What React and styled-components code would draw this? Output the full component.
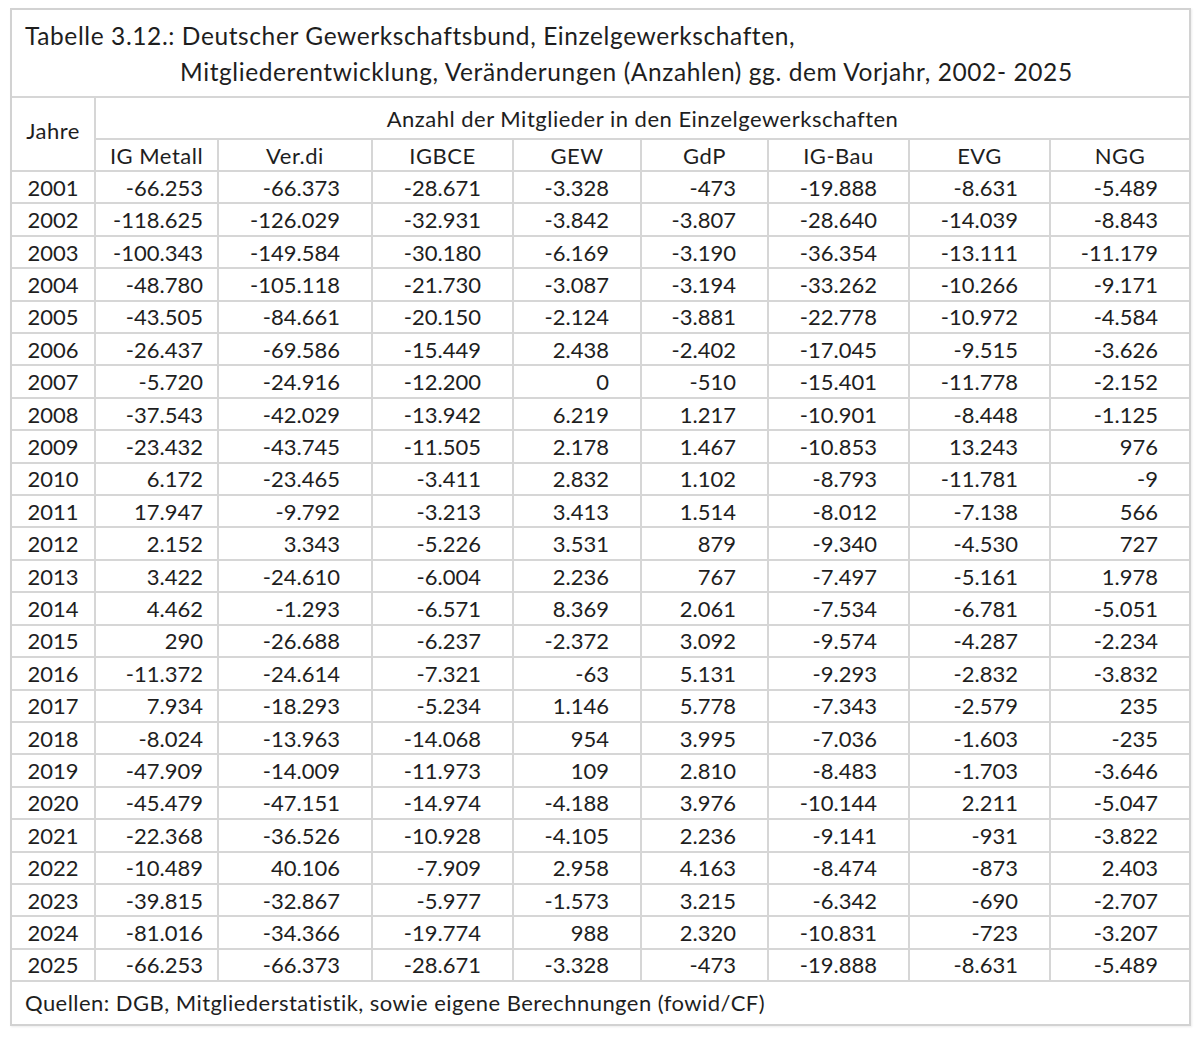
import React from "react";
import styled, { createGlobalStyle } from "styled-components";

const GlobalStyle = createGlobalStyle`
  html, body { margin: 0; padding: 0; background: #ffffff; }
  body { font-family: "Lato", "Liberation Sans", sans-serif; color: #1e1e1e; }
`;

const Page = styled.div`
  padding: 8px 0 0 10px;
  width: 1200px;
  height: 1038px;
  box-sizing: border-box;
`;

const Frame = styled.div`
  width: 1181px;
  box-sizing: border-box;
  border: 2px solid #d2d2d2;
  box-shadow: 1px 1px 2px rgba(0, 0, 0, 0.08);
  background: #fff;
`;

const Title = styled.div`
  padding: 8px 0 6px 13px;
  font-size: 24.5px;
  line-height: 36px;
  letter-spacing: 0.6px;
  border-bottom: 2px solid #d6d6d6;
`;

const TitleLine = styled.div`
  padding-left: ${(p) => p.$indent || 0}px;
  white-space: nowrap;
`;

const Table = styled.table`
  width: 100%;
  border-collapse: collapse;
  table-layout: fixed;
  font-size: 22px;
`;

const HeadCell = styled.th`
  font-weight: 400;
  text-align: center;
  vertical-align: middle;
  letter-spacing: 0.5px;
  padding: 0 0 ${(p) => p.$lift || 0}px 0;
  height: ${(p) => p.$h}px;
  border-right: 2px solid #d6d6d6;
  border-bottom: 2px solid #d6d6d6;
  &:last-child { border-right: none; }
`;

const Row = styled.tr`
  height: 32.42px;
`;

const YearCell = styled.td`
  text-align: center;
  padding: 0;
  border-right: 2px solid #d6d6d6;
  border-bottom: 2px solid #d6d6d6;
`;

const NumCell = styled.td`
  text-align: right;
  padding: 0 ${(p) => p.$pad}px 0 0;
  border-right: 2px solid #d6d6d6;
  border-bottom: 2px solid #d6d6d6;
  white-space: nowrap;
  &:last-child { border-right: none; }
`;

const Footer = styled.div`
  height: 42px;
  padding-left: 13px;
  font-size: 22px;
  line-height: 42px;
  letter-spacing: 0.45px;
  white-space: nowrap;
`;

const unions = ["IG Metall", "Ver.di", "IGBCE", "GEW", "GdP", "IG-Bau", "EVG", "NGG"];
const widths = [83, 123, 154, 141, 128, 127, 141, 141, 139];

const data = [
  [2001, "-66.253", "-66.373", "-28.671", "-3.328", "-473", "-19.888", "-8.631", "-5.489"],
  [2002, "-118.625", "-126.029", "-32.931", "-3.842", "-3.807", "-28.640", "-14.039", "-8.843"],
  [2003, "-100.343", "-149.584", "-30.180", "-6.169", "-3.190", "-36.354", "-13.111", "-11.179"],
  [2004, "-48.780", "-105.118", "-21.730", "-3.087", "-3.194", "-33.262", "-10.266", "-9.171"],
  [2005, "-43.505", "-84.661", "-20.150", "-2.124", "-3.881", "-22.778", "-10.972", "-4.584"],
  [2006, "-26.437", "-69.586", "-15.449", "2.438", "-2.402", "-17.045", "-9.515", "-3.626"],
  [2007, "-5.720", "-24.916", "-12.200", "0", "-510", "-15.401", "-11.778", "-2.152"],
  [2008, "-37.543", "-42.029", "-13.942", "6.219", "1.217", "-10.901", "-8.448", "-1.125"],
  [2009, "-23.432", "-43.745", "-11.505", "2.178", "1.467", "-10.853", "13.243", "976"],
  [2010, "6.172", "-23.465", "-3.411", "2.832", "1.102", "-8.793", "-11.781", "-9"],
  [2011, "17.947", "-9.792", "-3.213", "3.413", "1.514", "-8.012", "-7.138", "566"],
  [2012, "2.152", "3.343", "-5.226", "3.531", "879", "-9.340", "-4.530", "727"],
  [2013, "3.422", "-24.610", "-6.004", "2.236", "767", "-7.497", "-5.161", "1.978"],
  [2014, "4.462", "-1.293", "-6.571", "8.369", "2.061", "-7.534", "-6.781", "-5.051"],
  [2015, "290", "-26.688", "-6.237", "-2.372", "3.092", "-9.574", "-4.287", "-2.234"],
  [2016, "-11.372", "-24.614", "-7.321", "-63", "5.131", "-9.293", "-2.832", "-3.832"],
  [2017, "7.934", "-18.293", "-5.234", "1.146", "5.778", "-7.343", "-2.579", "235"],
  [2018, "-8.024", "-13.963", "-14.068", "954", "3.995", "-7.036", "-1.603", "-235"],
  [2019, "-47.909", "-14.009", "-11.973", "109", "2.810", "-8.483", "-1.703", "-3.646"],
  [2020, "-45.479", "-47.151", "-14.974", "-4.188", "3.976", "-10.144", "2.211", "-5.047"],
  [2021, "-22.368", "-36.526", "-10.928", "-4.105", "2.236", "-9.141", "-931", "-3.822"],
  [2022, "-10.489", "40.106", "-7.909", "2.958", "4.163", "-8.474", "-873", "2.403"],
  [2023, "-39.815", "-32.867", "-5.977", "-1.573", "3.215", "-6.342", "-690", "-2.707"],
  [2024, "-81.016", "-34.366", "-19.774", "988", "2.320", "-10.831", "-723", "-3.207"],
  [2025, "-66.253", "-66.373", "-28.671", "-3.328", "-473", "-19.888", "-8.631", "-5.489"],
];

export default function App() {
  return (
    <>
      <GlobalStyle />
      <Page>
        <Frame>
          <Title>
            <TitleLine>Tabelle 3.12.: Deutscher Gewerkschaftsbund, Einzelgewerkschaften,</TitleLine>
            <TitleLine $indent={155}>
              Mitgliederentwicklung, Veränderungen (Anzahlen) gg. dem Vorjahr, 2002- 2025
            </TitleLine>
          </Title>
          <Table>
            <colgroup>
              {widths.map((w, i) => (
                <col key={i} style={{ width: w }} />
              ))}
            </colgroup>
            <thead>
              <tr>
                <HeadCell rowSpan={2} $h={40} $lift={8}>Jahre</HeadCell>
                <HeadCell colSpan={8} $h={40}>Anzahl der Mitglieder in den Einzelgewerkschaften</HeadCell>
              </tr>
              <tr>
                {unions.map((u) => (
                  <HeadCell key={u} $h={30}>{u}</HeadCell>
                ))}
              </tr>
            </thead>
            <tbody>
              {data.map(([year, ...vals]) => (
                <Row key={year}>
                  <YearCell>{year}</YearCell>
                  {vals.map((v, i) => (
                    <NumCell key={i} $pad={i === 0 ? 14 : 31}>{v}</NumCell>
                  ))}
                </Row>
              ))}
            </tbody>
          </Table>
          <Footer>Quellen: DGB, Mitgliederstatistik, sowie eigene Berechnungen (fowid/CF)</Footer>
        </Frame>
      </Page>
    </>
  );
}
